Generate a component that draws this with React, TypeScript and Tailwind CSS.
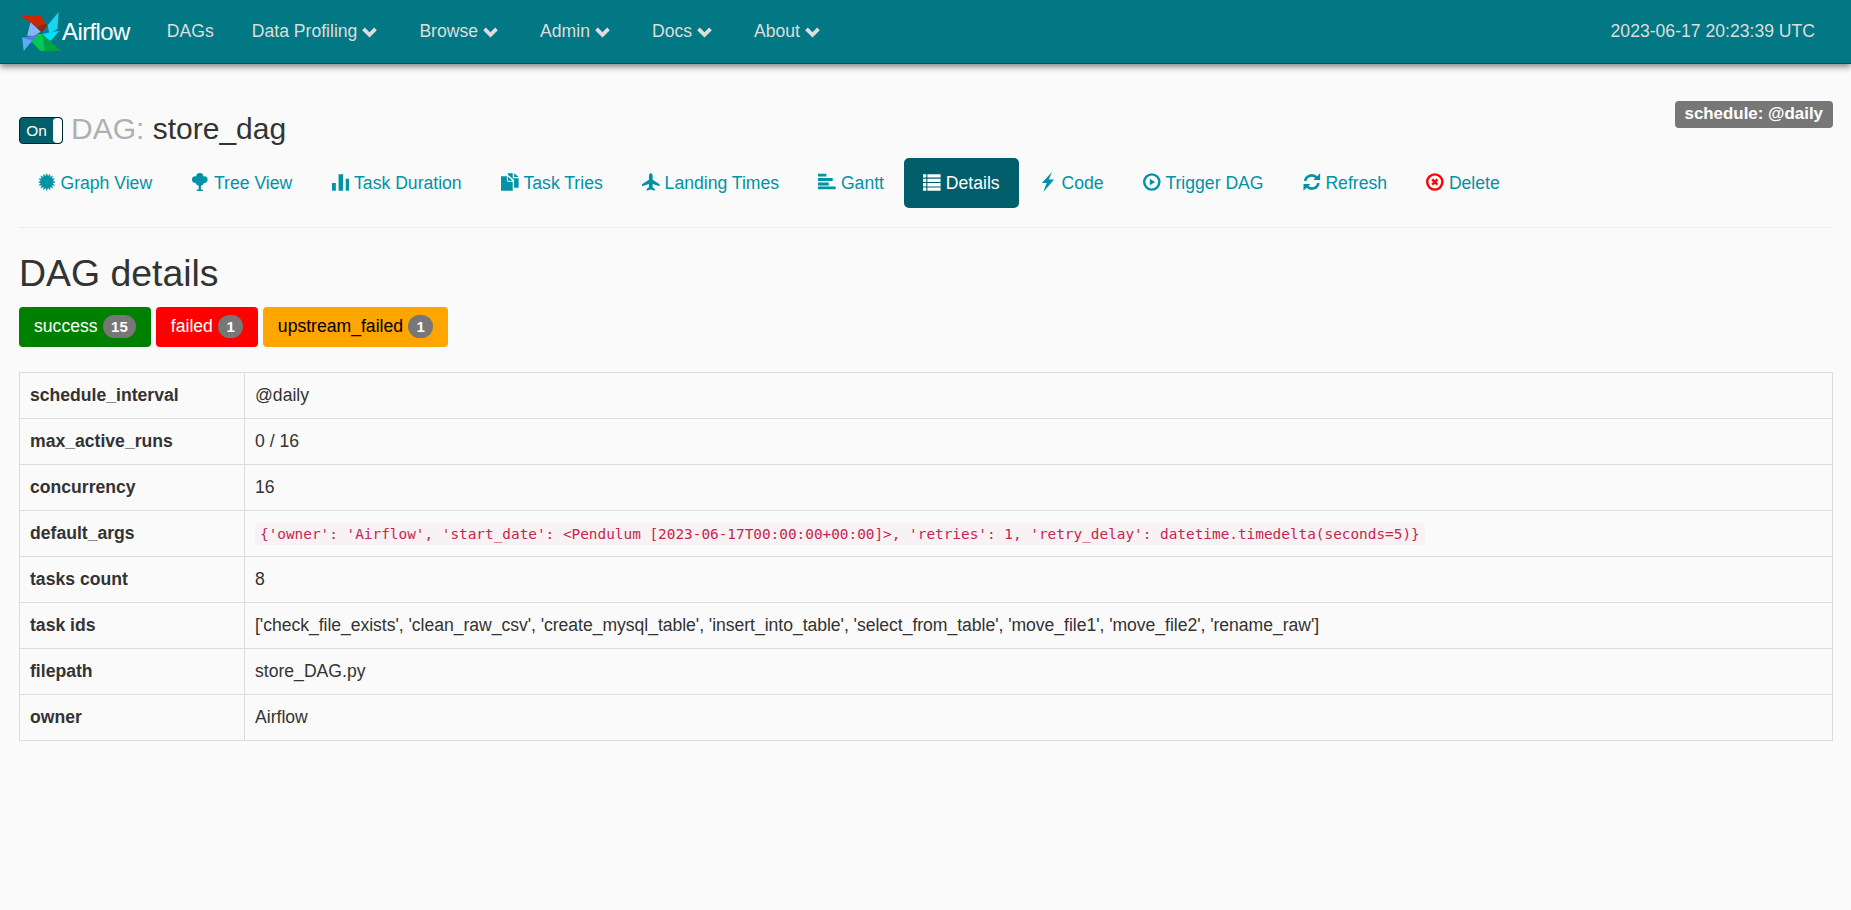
import React from "react";

const Chevron = () => (
  <span className="inline-block w-[19px] ml-[5px]">
    <svg viewBox="0 0 16 16" className="w-[15px] h-[15px] inline-block align-[-1.5px]" fill="currentColor">
      <path d="M8 14.4 0.2 6.6 3 3.8 8 8.8 13 3.8 15.8 6.6Z" />
    </svg>
  </span>
);

const Logo = () => (
  <svg viewBox="28 18 130 122" className="w-[44px] h-[42px] shrink-0 ml-[-1px]">
    <path d="M30 28 95 30 110 55 85 65Z" fill="#c92800" />
    <path d="M85 65 110 55 122 70 97 82Z" fill="#8f2a10" />
    <path d="M115 60 148 20 145 70 120 85Z" fill="#19d3f3" />
    <path d="M97 82 115 60 120 85Z" fill="#0a7f95" />
    <path d="M100 85 150 75 125 105 108 100Z" fill="#00e1ff" />
    <path d="M65 85 100 85 108 135 95 135 65 105Z" fill="#00c853" />
    <path d="M100 85 155 135 108 135Z" fill="#00a244" />
    <path d="M65 50 95 78 75 90 55 90Z" fill="#8ab4f8" />
    <path d="M40 95 75 90 90 85 65 110Z" fill="#4a7fe0" />
    <path d="M45 135 40 95 70 105Z" fill="#5da9ff" />
  </svg>
);

const ic = "w-[18px] h-[18px] block";
const burst = Array.from({ length: 32 }, (_, i) => {
  const r = i % 2 ? 5.6 : 8.2;
  const a = (i * Math.PI) / 16;
  return `${(8 + r * Math.cos(a)).toFixed(2)},${(8 + r * Math.sin(a)).toFixed(2)}`;
}).join(" ");
const Burst = () => (
  <svg viewBox="0 0 16 16" className={ic} fill="currentColor">
    <polygon points={burst} />
  </svg>
);
const Tree = () => (
  <svg viewBox="0 0 16 18" className={ic} fill="currentColor">
    <circle cx="8" cy="3.6" r="3.6" /><circle cx="3.6" cy="6.6" r="3.4" /><circle cx="12.4" cy="6.6" r="3.4" /><circle cx="8" cy="8.2" r="4.6" />
    <path d="M6.9 11h2.2v5.4H11V18H5v-1.6h1.9z" />
  </svg>
);
const Stats = () => (
  <svg viewBox="0 0 16 16" className={ic} fill="currentColor">
    <path d="M0 9h3.5v7H0zM6 1h4v15H6zM12.5 5H16v11h-3.5z" />
  </svg>
);
const Dup = () => (
  <svg viewBox="0 0 18 18" className={ic} fill="currentColor">
    <path d="M0 3h6v4.5c0 .8.4 1.2 1.2 1.2H12V18H0z" />
    <path d="M7 3.2 11.6 7.6H7z" />
    <path d="M7 0h5v4c0 .8.4 1.2 1.2 1.2H18V15h-4.6V7L7 1.5z" />
    <path d="M13.4 0 18 4h-4.6z" />
  </svg>
);
const Plane = () => (
  <svg viewBox="0 0 18 18" className={ic} fill="currentColor">
    <path d="M9 0c1.2 0 1.9 1.2 1.9 2.8V6.6L18 11.4v2L10.9 11v3.4l2.3 1.8V18L9 16.8 4.8 18v-1.8l2.3-1.8V11L0 13.4v-2l7.1-4.8V2.8C7.1 1.2 7.8 0 9 0z" />
  </svg>
);
const Gantt = () => (
  <svg viewBox="0 0 18 16" className="w-[19px] h-[17px] block" fill="currentColor">
    <path d="M0 0h8.5v3H0zM0 4.5h15v3H0zM0 9h11v3H0zM0 13h18v3H0z" />
  </svg>
);
const ListI = () => (
  <svg viewBox="0 0 16 16" className={ic} fill="currentColor">
    <path d="M0 1h3v3H0zM4 1H16v3H4zM0 5h3v3H0zM4 5H16v3H4zM0 9h3v3H0zM4 9H16v3H4zM0 13h3v3H0zM4 13H16v3H4z" />
  </svg>
);
const Bolt = () => (
  <svg viewBox="0 0 16 18" className="w-[20px] h-[20px] block shrink-0" fill="currentColor">
    <path d="M11.5 0 2.5 10H6.8L3.8 18 13.5 6.8H8.8Z" />
  </svg>
);
const Play = () => (
  <svg viewBox="0 0 16 16" className={ic} fill="currentColor">
    <path fillRule="evenodd" d="M8 0a8 8 0 1 0 0 16A8 8 0 0 0 8 0zm0 2.2a5.8 5.8 0 1 1 0 11.6A5.8 5.8 0 0 1 8 2.2z" />
    <path d="M6.2 5 11 8 6.2 11z" />
  </svg>
);
const Sync = () => (
  <svg viewBox="0 0 18 18" className={ic} fill="none" stroke="currentColor" strokeWidth="2.6">
    <path d="M2.2 8A6.9 6.9 0 0 1 14 4.4" />
    <path d="M15.8 10A6.9 6.9 0 0 1 4 13.6" />
    <path d="M17.5 0v7h-7z" fill="currentColor" stroke="none" />
    <path d="M.5 18v-7h7z" fill="currentColor" stroke="none" />
  </svg>
);
const Remove = () => (
  <svg viewBox="0 0 16 16" className={ic}>
    <path fill="#ff0000" fillRule="evenodd" d="M8 0a8 8 0 1 0 0 16A8 8 0 0 0 8 0zm0 2.2a5.8 5.8 0 1 1 0 11.6A5.8 5.8 0 0 1 8 2.2z" />
    <path stroke="#ff0000" strokeWidth="2.2" d="M5.7 5.7l4.6 4.6M10.3 5.7l-4.6 4.6" />
  </svg>
);

const navItems: [string, boolean][] = [
  ["DAGs", false],
  ["Data Profiling", true],
  ["Browse", true],
  ["Admin", true],
  ["Docs", true],
  ["About", true],
];

const tabs: [string, React.ReactNode, boolean?][] = [
  ["Graph View", <Burst />],
  ["Tree View", <Tree />],
  ["Task Duration", <Stats />],
  ["Task Tries", <Dup />],
  ["Landing Times", <Plane />],
  ["Gantt", <Gantt />],
  ["Details", <ListI />, true],
  ["Code", <Bolt />],
  ["Trigger DAG", <Play />],
  ["Refresh", <Sync />],
  ["Delete", <Remove />],
];

const rows: [string, React.ReactNode][] = [
  ["schedule_interval", "@daily"],
  ["max_active_runs", "0 / 16"],
  ["concurrency", "16"],
  [
    "default_args",
    <code className="bg-[#f9f2f4] text-[#c7254e] rounded-[4px] px-[5px] py-[3px] text-[14.38px] font-['DejaVu_Sans_Mono',monospace]">
      {"{'owner': 'Airflow', 'start_date': <Pendulum [2023-06-17T00:00:00+00:00]>, 'retries': 1, 'retry_delay': datetime.timedelta(seconds=5)}"}
    </code>,
  ],
  ["tasks count", "8"],
  [
    "task ids",
    <span className="tracking-[-0.04px]">
      {"['check_file_exists', 'clean_raw_csv', 'create_mysql_table', 'insert_into_table', 'select_from_table', 'move_file1', 'move_file2', 'rename_raw']"}
    </span>,
  ],
  ["filepath", "store_DAG.py"],
  ["owner", "Airflow"],
];

const Badge = ({ children }: { children: React.ReactNode }) => (
  <span className="inline-block ml-[5px] min-w-[25px] px-[8.5px] h-[23px] leading-[23px] rounded-full bg-[#777777] text-white text-[15px] font-bold text-center">
    {children}
  </span>
);

export default function App() {
  return (
    <div className="min-h-[910px] bg-[#fafafa] text-[#333333] text-[17.6px] font-['Liberation_Sans',Arial,sans-serif]">
      <header className="h-[64px] bg-[#017883] border-b border-[#0b4f55] shadow-[0_3px_6px_rgba(0,0,0,0.45)] flex items-center pl-[19px] pr-[36px] text-[#dddddd]">
        <Logo />
        <span className="text-white text-[24px] tracking-[-0.6px] mr-[37px]">Airflow</span>
        <nav className="flex gap-[38px]">
          {navItems.map(([n, c]) => (
            <span key={n} className="whitespace-nowrap">
              {n}
              {c && <Chevron />}
            </span>
          ))}
        </nav>
        <span className="ml-auto">2023-06-17 20:23:39 UTC</span>
      </header>

      <main className="pl-[19px] pr-[18px]">
        <div className="flex justify-between items-start pt-[37px] h-[84px]">
          <div className="flex items-center mt-[15px]">
            <div className="w-[44px] h-[27px] rounded-[4px] border border-[#00282c] bg-[#005f6a] text-white text-[15.4px] flex overflow-hidden">
              <span className="w-[33px] text-center leading-[25px]">On</span>
              <span className="flex-1 bg-white rounded-[4px]" />
            </div>
            <h1 className="ml-[8px] mt-[-2px] text-[30px] leading-[30px]">
              <span className="text-[#b0b0b0]">DAG: </span>store_dag
            </h1>
          </div>
          <span className="h-[27px] leading-[25px] px-[10px] rounded-[4px] bg-[#777777] text-white font-bold text-[16.9px]">
            schedule: @daily
          </span>
        </div>

        <nav className="flex gap-[1.4px] mt-[10px] pb-[19px] border-b border-[#eeeeee]">
          {tabs.map(([label, icon, active]) => (
            <span
              key={label}
              className={`flex items-center h-[50px] px-[19px] rounded-[5px] whitespace-nowrap ${
                active ? "bg-[#005f6a] text-white" : "text-[#0092a6]"
              }`}
            >
              <span className="w-[17.6px] mr-[4.9px] flex justify-center mt-[-3px]">{icon}</span>
              {label}
            </span>
          ))}
        </nav>

        <h2 className="text-[37.4px] leading-[40px] mt-[25px]">DAG details</h2>

        <div className="flex gap-[4.6px] mt-[14px]">
          <span className="h-[40px] rounded-[4px] bg-[#008000] text-white flex items-center px-[15px] pb-[2px]">
            success<Badge>15</Badge>
          </span>
          <span className="h-[40px] rounded-[4px] bg-[#ff0000] text-white flex items-center px-[15px] pb-[2px]">
            failed<Badge>1</Badge>
          </span>
          <span className="h-[40px] rounded-[4px] bg-[#ffa500] text-black flex items-center px-[15px] pb-[2px]">
            upstream_failed<Badge>1</Badge>
          </span>
        </div>

        <table className="w-full mt-[25px] border-collapse border border-[#dddddd]">
          <tbody>
            {rows.map(([k, v]) => (
              <tr key={k} className="h-[46px]">
                <td className="w-[225px] border border-[#dddddd] px-[10px] font-bold">{k}</td>
                <td className="border border-[#dddddd] px-[10px]">{v}</td>
              </tr>
            ))}
          </tbody>
        </table>
      </main>
    </div>
  );
}
